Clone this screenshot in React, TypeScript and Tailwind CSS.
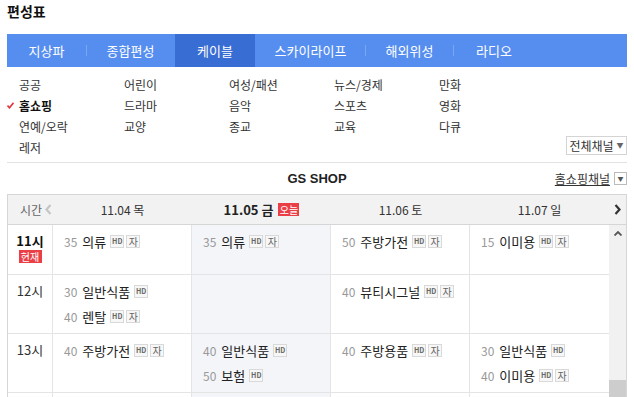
import React from "react";

const font = { fontFamily: '"Noto Sans CJK KR", "Noto Sans", sans-serif' };

const tabs = [
  { label: "지상파", w: "w-[79px]" },
  { label: "종합편성", w: "w-[87px]" },
  { label: "케이블", w: "w-[80px]", active: true },
  { label: "스카이라이프", w: "w-[109px]" },
  { label: "해외위성", w: "w-[87px]" },
  { label: "라디오", w: "w-[80px]" },
];

const categories = [
  ["공공", "어린이", "여성/패션", "뉴스/경제", "만화"],
  ["홈쇼핑", "드라마", "음악", "스포츠", "영화"],
  ["연예/오락", "교양", "종교", "교육", "다큐"],
  ["레저"],
];

type Item = { min: string; title: string; hd?: boolean; sub?: boolean };

const rows: { time: string; now?: boolean; h: string; cells: Item[][] }[] = [
  {
    time: "11시",
    now: true,
    h: "h-[50px]",
    cells: [
      [{ min: "35", title: "의류", hd: true, sub: true }],
      [{ min: "35", title: "의류", hd: true, sub: true }],
      [{ min: "50", title: "주방가전", hd: true, sub: true }],
      [{ min: "15", title: "이미용", hd: true, sub: true }],
    ],
  },
  {
    time: "12시",
    h: "h-[59px]",
    cells: [
      [
        { min: "30", title: "일반식품", hd: true },
        { min: "40", title: "렌탈", hd: true, sub: true },
      ],
      [],
      [{ min: "40", title: "뷰티시그널", hd: true, sub: true }],
      [],
    ],
  },
  {
    time: "13시",
    h: "h-[59px]",
    cells: [
      [{ min: "40", title: "주방가전", hd: true, sub: true }],
      [
        { min: "40", title: "일반식품", hd: true },
        { min: "50", title: "보험", hd: true },
      ],
      [{ min: "40", title: "주방용품", hd: true, sub: true }],
      [
        { min: "30", title: "일반식품", hd: true },
        { min: "40", title: "이미용", hd: true, sub: true },
      ],
    ],
  },
  {
    // next hour, below the fold
    time: "",
    h: "h-[59px]",
    cells: [[], [], [], []],
  },
];

const dates = [
  { label: "11.04 목" },
  { label: "11.05 금", today: true },
  { label: "11.06 토" },
  { label: "11.07 일" },
];

function Badge({ children, small }: { children: React.ReactNode; small?: boolean }) {
  return (
    <span
      className={`ml-[2px] inline-flex h-[13px] w-[14px] items-center justify-center border border-[#d9d9d9] bg-[#f7f7f7] text-[#666] ${
        small ? "text-[7px] font-bold" : "text-[10px]"
      }`}
    >
      {children}
    </span>
  );
}

export default function App() {
  return (
    <div className="h-[397px] w-[634px] overflow-hidden bg-white px-[7px] text-[#333]" style={font}>
      {/* title */}
      <div className="h-[34px] pt-[1px] text-[14px] font-bold leading-[20px] text-[#111]">편성표</div>

      {/* tabs */}
      <div className="flex h-[33px] items-center bg-[#568ef0] text-[13px] text-white">
        {tabs.map((t, i) => (
          <React.Fragment key={t.label}>
            {i > 0 && (
              <div
                className={`h-[11px] w-px ${
                  t.active || tabs[i - 1].active ? "bg-transparent w-0" : "bg-[#7aa6f4]"
                }`}
              />
            )}
            <div
              className={`flex h-full ${t.w} items-center justify-center ${
                t.active ? "bg-[#386dd3]" : ""
              }`}
            >
              {t.label}
            </div>
          </React.Fragment>
        ))}
      </div>

      {/* categories */}
      <div className="flex items-end justify-between border-b border-[#e2e2e2] pb-[4px] pt-[7px] text-[12px]">
        <div className="pl-[12px]">
          {categories.map((row, r) => (
            <div key={r} className="grid h-[21px] grid-cols-[105px_105px_105px_105px_105px] items-center">
              {row.map((c) =>
                c === "홈쇼핑" ? (
                  <span key={c} className="flex items-center font-bold text-[#111]">
                    <svg className="-ml-[12px] mr-[5px] h-[7px] w-[7px]" viewBox="0 0 7 7">
                      <path d="M0.5 3.5 L2.5 5.8 L6.5 0.8" fill="none" stroke="#e5333c" strokeWidth="1.6" />
                    </svg>
                    {c}
                  </span>
                ) : (
                  <span key={c}>{c}</span>
                )
              )}
            </div>
          ))}
        </div>
        <button className="mb-[3px] flex h-[19px] w-[61px] items-center justify-center gap-[3px] border border-[#d4d4d4] bg-white text-[12px] text-[#333]">
          전체채널
          <span className="text-[7px] text-[#666]">▼</span>
        </button>
      </div>

      {/* channel title */}
      <div className="grid h-[31px] grid-cols-[1fr_auto_1fr] items-center">
        <div />
        <div className="text-[13px] font-bold text-[#222]" style={{ fontFamily: '"Liberation Sans", "Noto Sans CJK KR", sans-serif' }}>
          GS SHOP
        </div>
        <div className="flex items-center justify-end gap-[4px] text-[12px] text-[#333]">
          <span className="underline">홈쇼핑채널</span>
          <span className="flex h-[13px] w-[13px] items-center justify-center border border-[#bbb] text-[6px] text-[#555]">▼</span>
        </div>
      </div>

      {/* date header */}
      <div className="flex h-[31px] items-center border border-[#d6d6d6] bg-[#f2f2f2] text-[12px]">
        <div className="flex w-[45px] items-center whitespace-nowrap pl-[12px] text-[#666]">
          시간
          <svg className="ml-[3px] h-[11px] w-[7px] shrink-0" viewBox="0 0 7 11">
            <path d="M5.5 1 L1.5 5.5 L5.5 10" fill="none" stroke="#c5c5c5" strokeWidth="2.2" />
          </svg>
        </div>
        {dates.map((d) => (
          <div key={d.label} className="flex w-[139px] items-center justify-center">
            {d.today ? (
              <>
                <span className="text-[13px] font-bold text-[#222]">{d.label}</span>
                <span className="ml-[5px] flex h-[13px] w-[21px] items-center justify-center bg-[#eb3f48] text-[10px] leading-none text-white">
                  오늘
                </span>
              </>
            ) : (
              <span className="text-[#333]">{d.label}</span>
            )}
          </div>
        ))}
        <div className="flex flex-1 items-center justify-center">
          <svg className="h-[11px] w-[7px]" viewBox="0 0 7 11">
            <path d="M1.5 1 L5.5 5.5 L1.5 10" fill="none" stroke="#333" strokeWidth="2.2" />
          </svg>
        </div>
      </div>

      {/* body */}
      <div className="flex h-[172px] overflow-hidden border-x border-[#d6d6d6]">
        <div className="w-[601px]">
          {rows.map((row, ri) => (
            <div key={ri} className={`flex ${row.h} border-b border-[#e4e4e4]`}>
              <div className="flex w-[45px] flex-col items-center border-r border-[#e4e4e4] pt-[8px]">
                <span className={`text-[13px] leading-[16px] ${row.now ? "font-bold text-[#111]" : "text-[#333]"}`}>
                  {row.time}
                </span>
                {row.now && (
                  <span className="mt-[1px] flex h-[13px] w-[23px] items-center justify-center bg-[#eb3f48] text-[10px] leading-none text-white">
                    현재
                  </span>
                )}
              </div>
              {row.cells.map((items, ci) => (
                <div
                  key={ci}
                  className={`w-[139px] pl-[11px] pt-[4px] ${ci < 3 ? "border-r border-[#e4e4e4]" : ""} ${
                    ci === 1 ? "bg-[#f4f5f9]" : ""
                  }`}
                >
                  {items.map((it, ii) => (
                    <div key={ii} className="flex h-[25px] items-center">
                      <span className="mr-[5px] text-[12px] text-[#999]">{it.min}</span>
                      <span className="mr-[2px] text-[13px] text-[#222]">{it.title}</span>
                      {it.hd && <Badge small>HD</Badge>}
                      {it.sub && <Badge>자</Badge>}
                    </div>
                  ))}
                </div>
              ))}
            </div>
          ))}
        </div>
        <div className="flex w-[18px] flex-col justify-between bg-[#f1f1f1]">
          <div className="flex h-[17px] items-center justify-center">
            <svg className="h-[5px] w-[8px]" viewBox="0 0 8 5">
              <path d="M0.5 4.5 L4 1 L7.5 4.5" fill="none" stroke="#555" strokeWidth="1.8" />
            </svg>
          </div>
          <div className="h-[17px] bg-[#cdcdcd]" />
        </div>
      </div>
    </div>
  );
}
